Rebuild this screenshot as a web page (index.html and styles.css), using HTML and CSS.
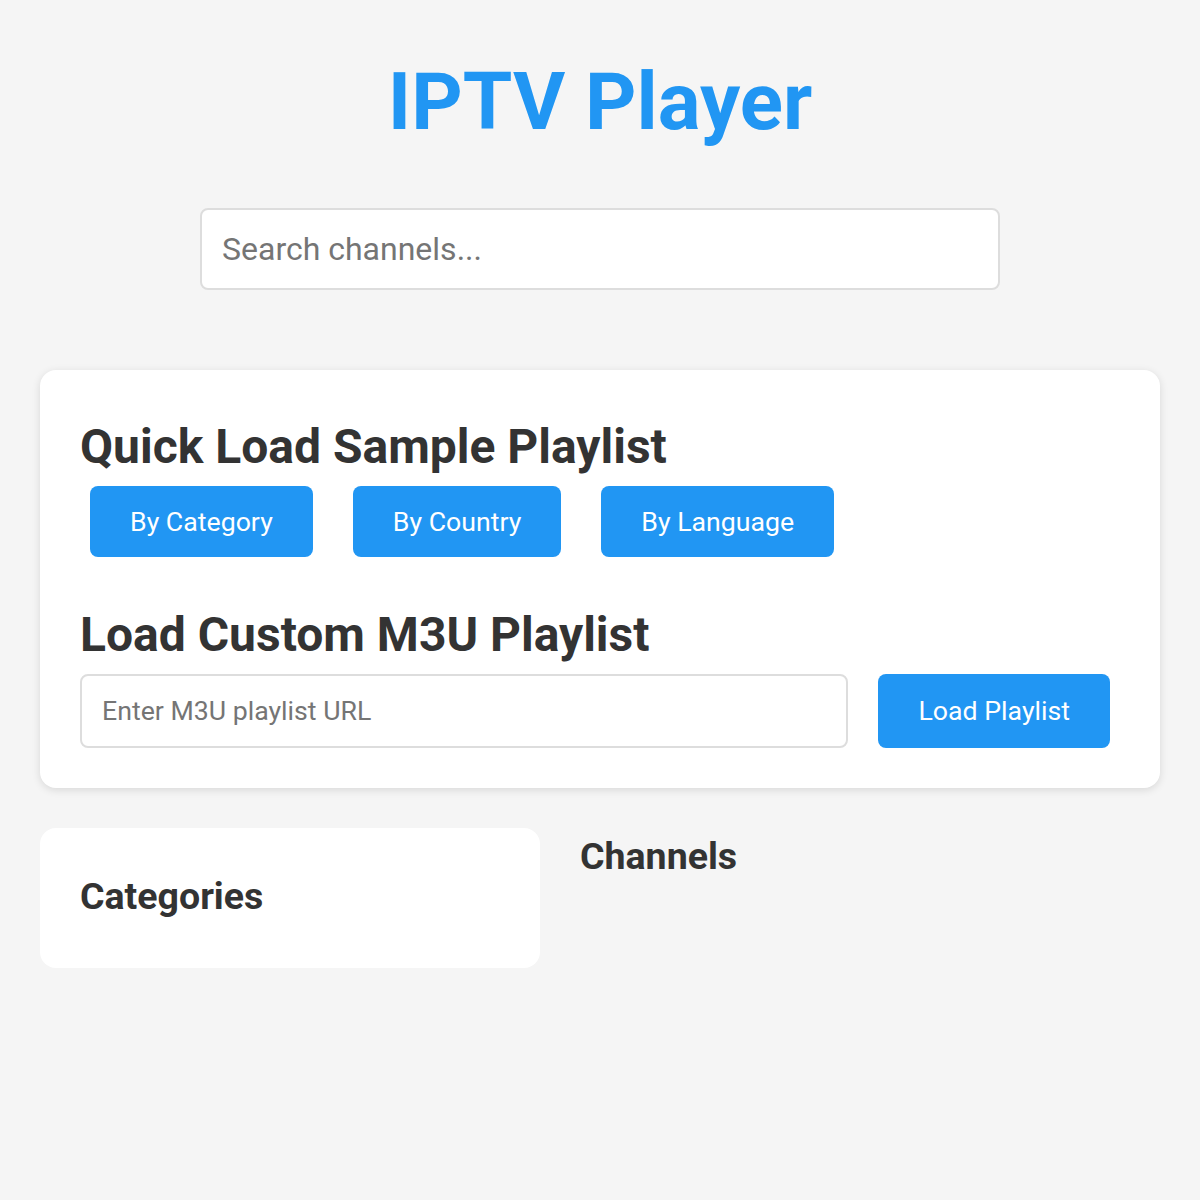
FILE: index.html
```html
<!DOCTYPE html>
<html lang="en">
<head>
    <meta charset="UTF-8">
    <meta name="viewport" content="width=device-width, initial-scale=1.0">
    <title>IPTV Player</title>
    <link rel="stylesheet" href="styles.css">
</head>
<body>
    <div class="container">
        <h1 class="title">IPTV Player</h1>

        <div class="search-wrap">
            <input type="text" class="search-input" placeholder="Search channels...">
        </div>

        <!-- playlist loader -->
        <div class="playlist-card">
            <h2 class="section-title">Quick Load Sample Playlist</h2>
            <div class="quick-buttons">
                <button class="btn">By Category</button>
                <button class="btn">By Country</button>
                <button class="btn">By Language</button>
            </div>

            <h2 class="section-title">Load Custom M3U Playlist</h2>
            <div class="url-row">
                <input type="text" class="url-input" placeholder="Enter M3U playlist URL">
                <button class="btn">Load Playlist</button>
            </div>
        </div>

        <div class="content">
            <div class="sidebar">
                <h3 class="sub-title">Categories</h3>
            </div>
            <div class="channels">
                <h3 class="sub-title">Channels</h3>
            </div>
        </div>
    </div>
</body>
</html>
```

FILE: styles.css
```css
body {
    margin: 0;
    background-color: #f5f5f5;
    font-family: Roboto, "Liberation Sans", sans-serif;
    color: #333;
}
.container {
    padding: 40px;
}
.title {
    margin: 15px 0 0;
    text-align: center;
    font-size: 80px;
    font-weight: 700;
    color: #2196f3;
}
.search-wrap {
    display: flex;
    justify-content: center;
    margin: 59px 0 80px;
}
.search-input {
    width: 800px;
    box-sizing: border-box;
    padding: 20px;
    font-family: inherit;
    font-size: 32px;
    border: 2px solid #ddd;
    border-radius: 8px;
    background: #fff;
    color: #333;
}
.search-input::placeholder,
.url-input::placeholder {
    color: #757575;
}
.playlist-card {
    background: #fff;
    border-radius: 16px;
    padding: 40px;
    box-shadow: 0 2px 8px rgba(0, 0, 0, 0.12);
}
.section-title {
    margin: 8px 0 11px;
    font-size: 48px;
    font-weight: 700;
}
.quick-buttons {
    display: flex;
    gap: 20px;
    margin-bottom: 49px;
}
.btn {
    margin: 0 10px;
    padding: 19.5px 40px;
    font-family: inherit;
    font-size: 26.7px;
    color: #fff;
    background-color: #2196f3;
    border: none;
    border-radius: 8px;
    cursor: pointer;
}
.url-row {
    display: flex;
    gap: 20px;
}
.url-input {
    flex: 1;
    height: 74px;
    box-sizing: border-box;
    padding: 0 20px;
    font-family: inherit;
    font-size: 26.7px;
    border: 2px solid #ddd;
    border-radius: 8px;
    color: #333;
}
.content {
    display: grid;
    grid-template-columns: 500px 1fr;
    gap: 40px;
    margin-top: 40px;
}
.sidebar {
    background: #fff;
    border-radius: 16px;
    padding: 40px;
}
.sub-title {
    margin: 6px 0 10px;
    font-size: 37.5px;
    font-weight: 700;
}
```
